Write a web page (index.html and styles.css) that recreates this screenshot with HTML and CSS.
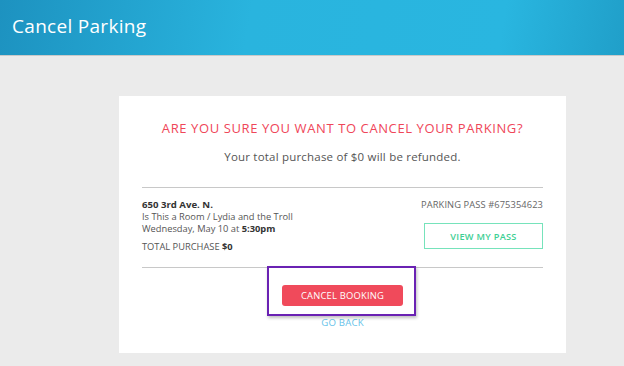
FILE: index.html
```html
<!DOCTYPE html>
<html lang="en">
<head>
    <meta charset="UTF-8">
    <meta name="viewport" content="width=device-width, initial-scale=1.0">
    <title>Cancel Parking</title>
    <link rel="stylesheet" href="styles.css">
</head>
<body>

<div class="topbar">
    <h1>Cancel Parking</h1>
</div>

<div class="page">
    <div class="card">
        <h2 class="question">ARE YOU SURE YOU WANT TO CANCEL YOUR PARKING?</h2>
        <p class="refund">Your total purchase of $0 will be refunded.</p>

        <div class="details">
            <div class="info">
                <div class="address">650 3rd Ave. N.</div>
                <div>Is This a Room / Lydia and the Troll</div>
                <div>Wednesday, May 10 at <b>5:30pm</b></div>
                <div class="total">TOTAL PURCHASE <b>$0</b></div>
            </div>
            <div class="pass">
                <div class="pass-no">PARKING PASS #675354623</div>
                <button class="btn-pass">VIEW MY PASS</button>
            </div>
        </div>

        <div class="actions">
            <div class="cancel-wrap">
                <button class="btn-cancel">CANCEL BOOKING</button>
                <span class="highlight"></span>
            </div>
            <a class="go-back" href="#">GO BACK</a>
        </div>
    </div>
</div>

</body>
</html>
```

FILE: styles.css
```css
body {
    font-family: "Open Sans", Arial, sans-serif;
    margin: 0;
    padding: 0;
    background-color: #ebebeb;
    overflow: hidden;
}
.topbar {
    height: 55px;
    background: linear-gradient(100deg, #1d92c0 0%, #29b4de 40%, #29b6e0 80%, #209fc9 100%);
    border-bottom: 1px solid #c9c9c9;
    display: flex;
    align-items: center;
    padding-left: 12px;
}
.topbar h1 {
    margin: 0;
    color: #ffffff;
    font-size: 19px;
    font-weight: 400;
    letter-spacing: 0.3px;
    padding-bottom: 4px;
}
.page {
    padding: 40px 0 0 119px;
}
.card {
    width: 401px;
    background-color: #ffffff;
    padding: 24px 23px 24px 23px;
}
.question {
    margin: 0;
    text-align: center;
    color: #ef4659;
    font-size: 13px;
    line-height: 16px;
    font-weight: 400;
    letter-spacing: 0.6px;
}
.refund {
    margin: 13px 0 0;
    text-align: center;
    color: #555;
    font-size: 11.5px;
    line-height: 16px;
    letter-spacing: 0.2px;
}
.details {
    margin-top: 22px;
    border-top: 1px solid #c8c8c8;
    border-bottom: 1px solid #c8c8c8;
    padding: 11px 0 13px;
    display: flex;
    justify-content: space-between;
    font-size: 9.3px;
    line-height: 12px;
    color: #555;
}
.details b {
    color: #333;
}
.address {
    font-weight: 700;
    color: #333;
    font-size: 9.6px;
}
.total {
    margin-top: 5px;
    line-height: 14px;
}
.pass {
    display: flex;
    flex-direction: column;
    align-items: flex-end;
}
.pass-no {
    color: #666;
    letter-spacing: 0.1px;
}
.btn-pass {
    margin-top: 12px;
    width: 119px;
    height: 26px;
    background: #fff;
    border: 1.5px solid #76e3bb;
    color: #3dcf93;
    font-family: inherit;
    font-size: 9.2px;
    font-weight: 600;
    letter-spacing: 0.3px;
    padding: 0;
}
.actions {
    display: flex;
    flex-direction: column;
    align-items: center;
    padding-top: 17px;
}
.cancel-wrap {
    position: relative;
}
.btn-cancel {
    display: block;
    width: 121px;
    height: 21px;
    background-color: #f04a5b;
    color: #fff;
    border: none;
    border-radius: 3px;
    font-family: inherit;
    font-size: 9.4px;
    letter-spacing: 0.2px;
    padding: 0;
}
.highlight {
    position: absolute;
    left: -15px;
    top: -19px;
    width: 145px;
    height: 46px;
    border: 2px solid #6a22b3;
    box-shadow: 1px 2px 3px rgba(0, 0, 0, 0.25);
}
.go-back {
    margin-top: 11px;
    color: #67c3ea;
    font-size: 9.6px;
    line-height: 12px;
    text-decoration: none;
    letter-spacing: 0.2px;
}
```
